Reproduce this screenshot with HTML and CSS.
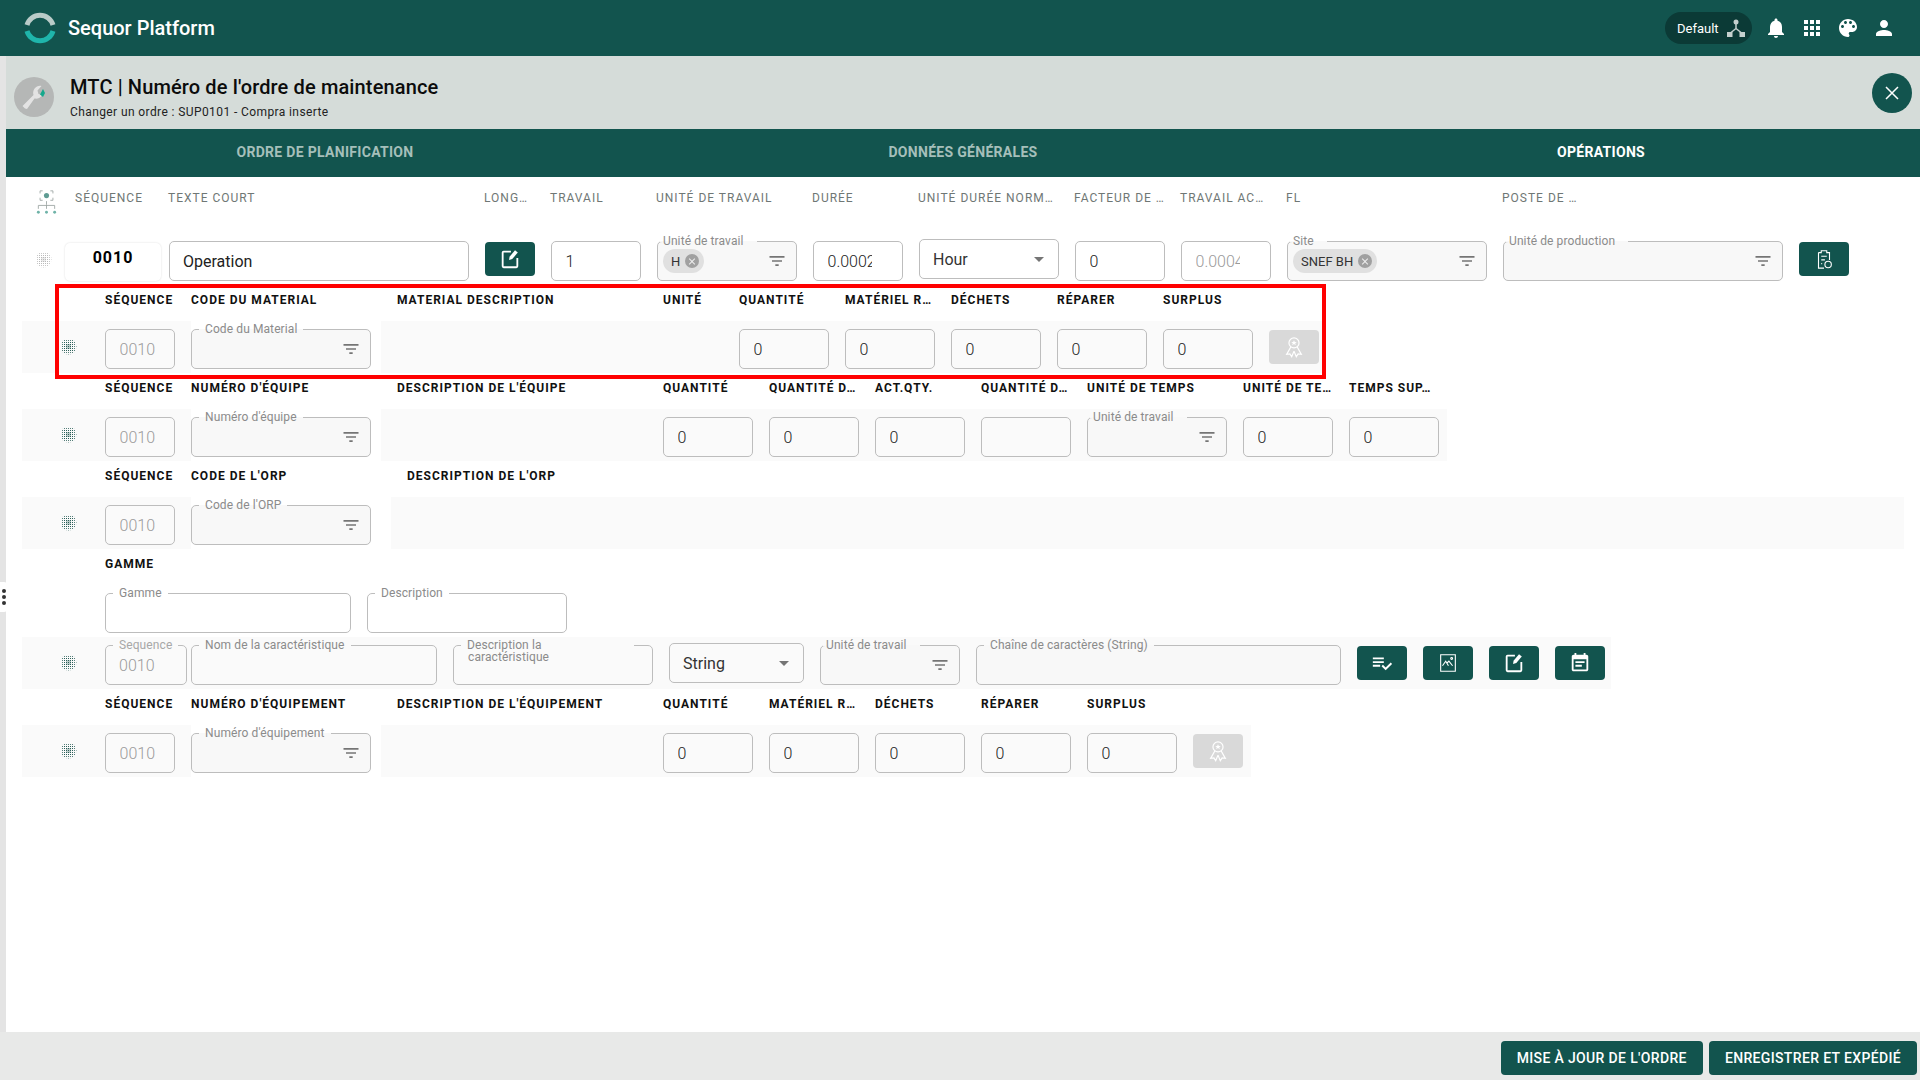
FILE: index.html
```html
<!DOCTYPE html>
<html lang="fr">
<head>
    <meta charset="UTF-8">
    <meta name="viewport" content="width=device-width, initial-scale=1.0">
    <title>Sequor Platform</title>
    <link rel="stylesheet" href="styles.css">
</head>
<body>
    <svg class="icon-defs" aria-hidden="true">
        <defs>
            <pattern id="dots" x="1" y="1" width="2" height="2" patternUnits="userSpaceOnUse">
                <rect width="1" height="1" fill="#2a5f58"/>
            </pattern>
        </defs>
        <symbol id="i-filter" viewBox="0 0 24 24"><path d="M10 18h4v-2h-4v2zM3 6v2h18V6H3zm3 7h12v-2H6v2z"/></symbol>
        <symbol id="i-drag" viewBox="0 0 16 16">
            <circle cx="7.500" cy="7.500" r="8" fill="url(#dots)" opacity=".8"/>
            <rect x="3" y="3" width="9" height="9" fill="url(#dots)"/>
            <rect x="5" y="5" width="5" height="5" fill="#2a5f58" opacity=".3"/>
        </symbol>
        <symbol id="i-edit" viewBox="0 0 24 24">
            <path fill="none" stroke="currentColor" stroke-width="2" d="M13 4H5a1 1 0 0 0-1 1v15a1 1 0 0 0 1 1h14a1 1 0 0 0 1-1v-9"/>
            <path d="M17.500 2.500l3 2.500-6 7-3.500 1 .5-3.500z"/>
        </symbol>
        <symbol id="i-award" viewBox="0 0 24 24">
            <g fill="none" stroke="currentColor" stroke-width="1.300">
                <circle cx="12" cy="7.500" r="5.500"/>
                <path d="M8.500 12L4 20l3.500-.5 2 3 2.500-6M15.500 12L20 20l-3.500-.5-2 3-2.500-6"/>
            </g>
            <path d="M12 4.500l.9 2h2.100l-1.700 1.300.7 2.200-2-1.300-2 1.300.7-2.200L9 6.500h2.100z"/>
        </symbol>
    </svg>

    <header class="topbar">
        <svg class="logo" viewBox="0 0 32 32">
            <path class="logo-top" d="M3 13A13.500 13.500 0 0 1 29 13"/>
            <path class="logo-bottom" d="M3 19A13.500 13.500 0 0 0 29 19"/>
        </svg>
        <span class="brand">Sequor Platform</span>
        <div class="topbar-right">
            <div class="org-chip">
                <span>Default</span>
                <svg class="org-icon" viewBox="0 0 18 18">
                    <circle cx="9" cy="3" r="2.500"/>
                    <path d="M0 13h5.500v5H0zM12.500 13H18v5h-5.500z"/>
                    <path class="org-line" d="M9 4v6M9 9.500l-5 4M9 9.500l5 4"/>
                </svg>
            </div>
            <svg class="top-icon" viewBox="0 0 24 24"><path d="M12 22c1.100 0 2-.9 2-2h-4c0 1.100.89 2 2 2zm6-6v-5c0-3.070-1.640-5.640-4.500-6.320V4c0-.83-.67-1.500-1.500-1.500s-1.500.67-1.500 1.500v.68C7.630 5.360 6 7.920 6 11v5l-2 2v1h16v-1l-2-2z"/></svg>
            <svg class="top-icon" viewBox="0 0 24 24"><path d="M4 8h4V4H4v4zm6 12h4v-4h-4v4zm-6 0h4v-4H4v4zm0-6h4v-4H4v4zm6 0h4v-4h-4v4zm6-10v4h4V4h-4zm-6 4h4V4h-4v4zm6 6h4v-4h-4v4zm0 6h4v-4h-4v4z"/></svg>
            <svg class="top-icon" viewBox="0 0 24 24"><path d="M12 3c-4.970 0-9 4.030-9 9s4.030 9 9 9c.83 0 1.500-.67 1.500-1.500 0-.39-.15-.74-.39-1.010-.23-.26-.38-.61-.38-.99 0-.83.67-1.500 1.500-1.500H16c2.760 0 5-2.240 5-5 0-4.420-4.030-8-9-8zm-5.500 9c-.83 0-1.500-.67-1.500-1.500S5.670 9 6.500 9 8 9.670 8 10.500 7.330 12 6.500 12zm3-4C8.670 8 8 7.330 8 6.500S8.670 5 9.500 5s1.500.67 1.500 1.500S10.330 8 9.500 8zm5 0c-.83 0-1.500-.67-1.500-1.500S13.670 5 14.500 5s1.500.67 1.500 1.500S15.330 8 14.500 8zm3 4c-.83 0-1.500-.67-1.500-1.500S16.670 9 17.500 9s1.500.67 1.500 1.500-.67 1.500-1.500 1.500z"/></svg>
            <svg class="top-icon" viewBox="0 0 24 24"><path d="M12 12c2.210 0 4-1.790 4-4s-1.790-4-4-4-4 1.790-4 4 1.790 4 4 4zm0 2c-2.670 0-8 1.340-8 4v2h16v-2c0-2.660-5.330-4-8-4z"/></svg>
        </div>
    </header>

    <div class="page">
        <div class="rail">
            <div class="rail-handle"><i></i><i></i><i></i></div>
        </div>

        <main class="content">
            <section class="subheader">
                <div class="sub-icon">
                    <svg viewBox="0 0 40 40">
                        <path class="wrench" d="M11 31.500l-2.500-2.500 11-11c-1-3.500.5-7 3.500-8.500 1.500-.7 3-.8 4.500-.5l-4 4.500 1 3.500 3.500 1-.5 1c-1.500 2-4 3-7 2.500L13 32z"/>
                        <path class="wrench-tip" d="M29 12l2 4-2 4-3-2.500z"/>
                    </svg>
                </div>
                <div class="sub-text">
                    <h1>MTC | Numéro de l'ordre de maintenance</h1>
                    <p>Changer un ordre : SUP0101 - Compra inserte</p>
                </div>
                <button class="close-btn" type="button" aria-label="Fermer">
                    <svg viewBox="0 0 16 16"><path d="M2 2l12 12M14 2L2 14"/></svg>
                </button>
            </section>

            <nav class="tabs">
                <a class="tab">ORDRE DE PLANIFICATION</a>
                <a class="tab">DONNÉES GÉNÉRALES</a>
                <a class="tab active">OPÉRATIONS</a>
            </nav>

            <div class="col-head">
                <svg class="tree-icon" viewBox="0 0 23 28">
                    <path class="tree-line" d="M7 1H4v3M16 1h3v3M7 12H4V9M16 12h3V9M11.500 13v4M2 22v-4h19v4M11.500 17v5"/>
                    <circle class="tree-eye" cx="11.500" cy="6.500" r="3"/>
                    <circle class="tree-dot" cx="2" cy="26" r="1.700"/>
                    <circle class="tree-dot" cx="11.500" cy="26" r="1.700"/>
                    <circle class="tree-dot" cx="21" cy="26" r="1.700"/>
                </svg>
                <span class="w77">SÉQUENCE</span>
                <span class="w300">TEXTE COURT</span>
                <span class="w50">LONG…</span>
                <span class="w90">TRAVAIL</span>
                <span class="w140">UNITÉ DE TRAVAIL</span>
                <span class="w90">DURÉE</span>
                <span class="w140">UNITÉ DURÉE NORM…</span>
                <span class="w90">FACTEUR DE …</span>
                <span class="w90">TRAVAIL AC…</span>
                <span class="w200">FL</span>
                <span class="w76">POSTE DE …</span>
            </div>

            <div class="op-row">
                <svg class="drag drag-faint"><use href="#i-drag"/></svg>
                <div class="seq-card">0010</div>
                <div class="field w300 field-big"><span>Operation</span></div>
                <button class="act-btn lift" type="button"><svg viewBox="0 0 24 24"><use href="#i-edit"/></svg></button>
                <div class="field w90"><span>1</span></div>
                <fieldset class="box w140 filled chip-box">
                    <legend class="tight">Unité de travail</legend>
                    <span class="chip">H<i class="chip-x"></i></span>
                    <svg class="filter"><use href="#i-filter"/></svg>
                </fieldset>
                <div class="field w90 clip"><span>0.0002</span></div>
                <div class="pick w140 raise"><span>Hour</span><i class="caret"></i></div>
                <div class="field w90"><span>0</span></div>
                <div class="field w90 clip muted"><span>0.0004</span></div>
                <fieldset class="box w200 filled chip-box">
                    <legend class="tight">Site</legend>
                    <span class="chip">SNEF BH<i class="chip-x"></i></span>
                    <svg class="filter"><use href="#i-filter"/></svg>
                </fieldset>
                <fieldset class="box w280 filled">
                    <legend class="tight">Unité de production</legend>
                    <svg class="filter"><use href="#i-filter"/></svg>
                </fieldset>
                <button class="act-btn lift" type="button">
                    <svg viewBox="0 0 24 24" class="line-icon"><path d="M6 5h3V3h6v2h3v8M6 5v17h6M9 9h6M9 13h4M9 17h1"/><circle cx="16.500" cy="18" r="3.500"/></svg>
                </button>
            </div>

            <!-- material -->
            <div class="labels">
                <span class="w70">SÉQUENCE</span>
                <span class="w180">CODE DU MATERIAL</span>
                <span class="w250 desc-gap">MATERIAL DESCRIPTION</span>
                <span class="w60">UNITÉ</span>
                <span class="w90">QUANTITÉ</span>
                <span class="w90">MATÉRIEL R…</span>
                <span class="w90">DÉCHETS</span>
                <span class="w90">RÉPARER</span>
                <span class="w90">SURPLUS</span>
            </div>
            <div class="line">
                <div class="band band-seq">
                    <svg class="drag"><use href="#i-drag"/></svg>
                    <div class="field w70 muted"><span>0010</span></div>
                </div>
                <div class="select-cell">
                    <fieldset class="box w180 filled">
                        <legend>Code du Material</legend>
                        <svg class="filter"><use href="#i-filter"/></svg>
                    </fieldset>
                </div>
                <div class="band band-rest band-material">
                    <div class="w250"></div>
                    <div class="w60"></div>
                    <div class="field w90"><span>0</span></div>
                    <div class="field w90"><span>0</span></div>
                    <div class="field w90"><span>0</span></div>
                    <div class="field w90"><span>0</span></div>
                    <div class="field w90"><span>0</span></div>
                    <button class="act-btn act-off lift" type="button"><svg viewBox="0 0 24 24"><use href="#i-award"/></svg></button>
                </div>
            </div>

            <!-- equipe -->
            <div class="labels">
                <span class="w70">SÉQUENCE</span>
                <span class="w180">NUMÉRO D'ÉQUIPE</span>
                <span class="w250 desc-gap">DESCRIPTION DE L'ÉQUIPE</span>
                <span class="w90">QUANTITÉ</span>
                <span class="w90">QUANTITÉ D…</span>
                <span class="w90">ACT.QTY.</span>
                <span class="w90">QUANTITÉ D…</span>
                <span class="w140">UNITÉ DE TEMPS</span>
                <span class="w90">UNITÉ DE TE…</span>
                <span class="w90">TEMPS SUP…</span>
            </div>
            <div class="line">
                <div class="band band-seq">
                    <svg class="drag"><use href="#i-drag"/></svg>
                    <div class="field w70 muted"><span>0010</span></div>
                </div>
                <div class="select-cell">
                    <fieldset class="box w180 filled">
                        <legend>Numéro d'équipe</legend>
                        <svg class="filter"><use href="#i-filter"/></svg>
                    </fieldset>
                </div>
                <div class="band band-rest band-team">
                    <div class="w250"></div>
                    <div class="field w90"><span>0</span></div>
                    <div class="field w90"><span>0</span></div>
                    <div class="field w90"><span>0</span></div>
                    <div class="field w90"></div>
                    <fieldset class="box w140 filled">
                        <legend class="tight">Unité de travail</legend>
                        <svg class="filter"><use href="#i-filter"/></svg>
                    </fieldset>
                    <div class="field w90"><span>0</span></div>
                    <div class="field w90"><span>0</span></div>
                </div>
            </div>

            <!-- orp -->
            <div class="labels">
                <span class="w70">SÉQUENCE</span>
                <span class="w180">CODE DE L'ORP</span>
                <span class="w250 desc-gap-wide">DESCRIPTION DE L'ORP</span>
            </div>
            <div class="line">
                <div class="band band-seq">
                    <svg class="drag"><use href="#i-drag"/></svg>
                    <div class="field w70 muted"><span>0010</span></div>
                </div>
                <div class="select-cell select-cell-wide">
                    <fieldset class="box w180 filled">
                        <legend>Code de l'ORP</legend>
                        <svg class="filter"><use href="#i-filter"/></svg>
                    </fieldset>
                </div>
                <div class="band band-rest band-fill"></div>
            </div>

            <!-- gamme -->
            <div class="labels labels-low">
                <span class="w180">GAMME</span>
            </div>
            <div class="gamme-row">
                <fieldset class="box w246">
                    <legend>Gamme</legend>
                </fieldset>
                <fieldset class="box w200">
                    <legend>Description</legend>
                </fieldset>
            </div>
            <div class="line">
                <div class="band band-char">
                    <svg class="drag"><use href="#i-drag"/></svg>
                    <fieldset class="box w82 seq-box">
                        <legend>Sequence</legend>
                        <span class="box-val">0010</span>
                    </fieldset>
                    <fieldset class="box w246">
                        <legend>Nom de la caractéristique</legend>
                    </fieldset>
                    <fieldset class="box w200 note-box">
                        <legend class="legend-wide">Description la</legend>
                        <span class="box-note">caractéristique</span>
                    </fieldset>
                    <div class="pick w135 raise"><span>String</span><i class="caret"></i></div>
                    <fieldset class="box w140 filled">
                        <legend class="tight">Unité de travail</legend>
                        <svg class="filter"><use href="#i-filter"/></svg>
                    </fieldset>
                    <fieldset class="box w365 filled">
                        <legend>Chaîne de caractères (String)</legend>
                    </fieldset>
                    <button class="act-btn lift" type="button">
                        <svg viewBox="0 0 24 24"><path d="M14 10H2v2h12v-2zm0-4H2v2h12V6zM2 16h8v-2H2v2zm19.500-4.500L23 13l-6.990 7-4.510-4.500L13 14l3.010 3 5.490-5.500z"/></svg>
                    </button>
                    <button class="act-btn lift" type="button">
                        <svg viewBox="0 0 24 24" class="line-icon"><path d="M4 3h16v18H4zM6 15l3.500-5 3 5M11 12l2-2 4 5"/><circle cx="16" cy="7" r="1"/></svg>
                    </button>
                    <button class="act-btn lift" type="button"><svg viewBox="0 0 24 24"><use href="#i-edit"/></svg></button>
                    <button class="act-btn lift" type="button">
                        <svg viewBox="0 0 24 24"><path d="M17 10H7v2h10v-2zm2-7h-1V1h-2v2H8V1H6v2H5c-1.110 0-1.990.9-1.990 2L3 19c0 1.100.89 2 2 2h14c1.100 0 2-.9 2-2V5c0-1.100-.9-2-2-2zm0 16H5V8h14v11zm-5-5H7v2h7v-2z"/></svg>
                    </button>
                </div>
            </div>

            <!-- equipement -->
            <div class="labels labels-low">
                <span class="w70">SÉQUENCE</span>
                <span class="w180">NUMÉRO D'ÉQUIPEMENT</span>
                <span class="w250 desc-gap">DESCRIPTION DE L'ÉQUIPEMENT</span>
                <span class="w90">QUANTITÉ</span>
                <span class="w90">MATÉRIEL R…</span>
                <span class="w90">DÉCHETS</span>
                <span class="w90">RÉPARER</span>
                <span class="w90">SURPLUS</span>
            </div>
            <div class="line">
                <div class="band band-seq">
                    <svg class="drag"><use href="#i-drag"/></svg>
                    <div class="field w70 muted"><span>0010</span></div>
                </div>
                <div class="select-cell">
                    <fieldset class="box w180 filled">
                        <legend>Numéro d'équipement</legend>
                        <svg class="filter"><use href="#i-filter"/></svg>
                    </fieldset>
                </div>
                <div class="band band-rest band-equip">
                    <div class="w250"></div>
                    <div class="field w90"><span>0</span></div>
                    <div class="field w90"><span>0</span></div>
                    <div class="field w90"><span>0</span></div>
                    <div class="field w90"><span>0</span></div>
                    <div class="field w90"><span>0</span></div>
                    <button class="act-btn act-off lift" type="button"><svg viewBox="0 0 24 24"><use href="#i-award"/></svg></button>
                </div>
            </div>

            <div class="red-mark"></div>
        </main>
    </div>

    <footer class="footer">
        <button class="foot-btn" type="button">MISE À JOUR DE L'ORDRE</button>
        <button class="foot-btn" type="button">ENREGISTRER ET EXPÉDIÉ</button>
    </footer>
</body>
</html>
```

FILE: styles.css
```css
* {
    margin: 0;
    padding: 0;
    box-sizing: border-box;
}
body {
    height: 1080px;
    overflow: hidden;
    display: flex;
    flex-direction: column;
    font-family: Roboto, "Liberation Sans", sans-serif;
    color: #222;
    background-color: #fff;
}
.icon-defs {
    position: absolute;
    width: 0;
    height: 0;
}

/* top bar */
.topbar {
    height: 56px;
    flex: none;
    display: flex;
    align-items: center;
    padding: 0 24px;
    background-color: #12544e;
    color: #fff;
}
.logo {
    width: 32px;
    height: 32px;
    margin-right: 12px;
    fill: none;
    stroke-width: 5;
}
.logo-top {
    stroke: #b9cbc8;
}
.logo-bottom {
    stroke: #1fb5ab;
}
.brand {
    font-size: 20px;
    font-weight: 500;
}
.topbar-right {
    margin-left: auto;
    display: flex;
    align-items: center;
    gap: 12px;
}
.org-chip {
    width: 87px;
    height: 32px;
    padding: 0 7px 0 12px;
    display: flex;
    align-items: center;
    justify-content: space-between;
    border-radius: 16px;
    background-color: #0b3a36;
    font-size: 13px;
}
.org-icon {
    width: 18px;
    height: 18px;
    fill: #c5d0ce;
}
.org-line {
    fill: none;
    stroke: #c5d0ce;
    stroke-width: 1.500;
}
.top-icon {
    width: 24px;
    height: 24px;
    fill: #fff;
}

/* page frame */
.page {
    flex: 1;
    display: flex;
    min-height: 0;
}
.rail {
    width: 6px;
    flex: none;
    position: relative;
    background-color: #e4e4e4;
}
.rail-handle {
    position: absolute;
    top: 526px;
    left: 0;
    width: 7px;
    height: 30px;
    display: flex;
    flex-direction: column;
    align-items: center;
    justify-content: center;
    gap: 2px;
    background-color: #fff;
    border-radius: 0 3px 3px 0;
}
.rail-handle i {
    width: 4px;
    height: 4px;
    border-radius: 50%;
    background-color: #333;
}
.content {
    flex: 1;
    min-width: 0;
    position: relative;
}

/* sub header */
.subheader {
    height: 73px;
    display: flex;
    align-items: center;
    padding: 0 8px 0 8px;
    background-color: #d5dcd9;
}
.sub-icon {
    width: 40px;
    height: 40px;
    margin: 9px 16px 0 0;
    border-radius: 50%;
    background-color: #b5b7b6;
}
.sub-icon svg {
    display: block;
}
.wrench {
    fill: #e3e3e3;
}
.wrench-tip {
    fill: #14a88c;
}
.sub-text {
    margin-top: 8px;
}
.sub-text h1 {
    font-size: 20px;
    font-weight: 500;
    line-height: 24px;
    letter-spacing: .13px;
    color: #0c0c0c;
}
.sub-text p {
    margin-top: 6px;
    font-size: 12px;
    line-height: 14px;
    letter-spacing: .4px;
    color: #222;
}
.close-btn {
    margin-left: auto;
    width: 40px;
    height: 40px;
    display: flex;
    align-items: center;
    justify-content: center;
    border: 0;
    border-radius: 50%;
    background-color: #12544e;
}
.close-btn svg {
    width: 16px;
    height: 16px;
    fill: none;
    stroke: #fff;
    stroke-width: 1.500;
}

/* tabs */
.tabs {
    height: 48px;
    display: grid;
    grid-template-columns: repeat(3, 638px);
    background-color: #12544e;
}
.tab {
    display: flex;
    align-items: center;
    justify-content: center;
    padding-bottom: 2px;
    font-size: 14px;
    font-weight: 700;
    letter-spacing: .3px;
    color: #a5bfba;
}
.tab.active {
    color: #fff;
}

/* widths shared by labels and fields */
.w50 { width: 50px; }
.w60 { width: 60px; }
.w70 { width: 70px; }
.w76 { width: 76px; }
.w77 { width: 77px; }
.w82 { width: 82px; }
.w90 { width: 90px; }
.w135 { width: 135px; }
.w140 { width: 140px; }
.w180 { width: 180px; }
.w200 { width: 200px; }
.w246 { width: 246px; }
.w250 { width: 250px; }
.w280 { width: 280px; }
.w300 { width: 300px; }
.w365 { width: 365px; }

/* first table head */
.col-head {
    height: 40px;
    display: flex;
    align-items: center;
    gap: 16px;
    padding: 1px 0 0 29px;
    font-size: 12px;
    letter-spacing: 1px;
    color: #6f7775;
}
.col-head span {
    flex: none;
    white-space: nowrap;
}
.tree-icon {
    width: 23px;
    height: 24px;
    flex: none;
    margin: 8px 1px 0 0;
}
.tree-line {
    fill: none;
    stroke: #9aa4a2;
    stroke-width: 1;
}
.tree-eye {
    fill: #5f9c93;
}
.tree-dot {
    fill: #6fb3a8;
}

.op-row {
    height: 68px;
    padding: 24px 0 0 30px;
    display: flex;
    align-items: flex-start;
    gap: 16px;
}
.seq-card {
    width: 96px;
    height: 38px;
    margin: 2px -8px 0 -3px;
    display: flex;
    align-items: center;
    justify-content: center;
    padding-bottom: 10px;
    border-radius: 5px;
    box-shadow: 0 0 2px rgba(0, 0, 0, .15);
    font-size: 16px;
    font-weight: 700;
    letter-spacing: 1px;
    color: #000;
}

/* fields */
.field {
    height: 40px;
    flex: none;
    display: flex;
    align-items: center;
    padding: 0 14px 0 13.500px;
    border: 1px solid #bdbdbd;
    border-radius: 5px;
    font-size: 16px;
    font-weight: 300;
    color: #222;
}
.field span {
    display: block;
    width: 100%;
    overflow: hidden;
    white-space: nowrap;
}
.field-big {
    padding-left: 13px;
    font-weight: 400;
}
.clip {
    padding-right: 30px;
}
.muted {
    color: #9a9a9a;
}
.box {
    height: 40px;
    flex: none;
    min-width: 0;
    display: flex;
    align-items: center;
    justify-content: flex-end;
    padding: 0 13px 0 14px;
    border: 1px solid #bdbdbd;
    border-radius: 5px;
}
.box legend {
    height: 1px;
    line-height: 1px;
    margin-left: -7px;
    padding: 0 6px;
    font-size: 12px;
    letter-spacing: .1px;
    font-weight: 400;
    white-space: nowrap;
    color: #8b8b8b;
}
.box legend.tight {
    margin-left: -12px;
    padding: 0 13px 0 3px;
}
.box legend.legend-wide {
    width: 173px;
}
.filled {
    background-color: #f8f8f8;
}
.chip-box {
    justify-content: space-between;
    padding-left: 5px;
}
.chip-box legend.tight {
    margin-left: -3px;
}
.chip {
    height: 24px;
    display: flex;
    align-items: center;
    gap: 5px;
    padding: 0 5px 0 8px;
    border-radius: 12px;
    background-color: #e0e0e0;
    font-size: 13px;
    color: #333;
}
.chip-x {
    width: 14px;
    height: 14px;
    position: relative;
    border-radius: 50%;
    background-color: #a0a0a0;
}
.chip-x::before,
.chip-x::after {
    content: "";
    position: absolute;
    top: 6.500px;
    left: 3px;
    width: 8px;
    height: 1px;
    background-color: #eee;
    transform: rotate(45deg);
}
.chip-x::after {
    transform: rotate(-45deg);
}
.filter {
    width: 20px;
    height: 20px;
    flex: none;
    margin-right: -4px;
    fill: #757575;
}
.pick {
    height: 40px;
    flex: none;
    display: flex;
    align-items: center;
    justify-content: space-between;
    padding: 0 14px 0 13px;
    border: 1px solid #bdbdbd;
    border-radius: 5px;
    font-size: 16px;
    color: #333;
}
.raise {
    margin-top: -2px;
}
.caret {
    border-left: 5px solid transparent;
    border-right: 5px solid transparent;
    border-top: 5px solid #757575;
}
.box-val {
    width: 100%;
    font-size: 16px;
    font-weight: 300;
    color: #9a9a9a;
}
.seq-box {
    padding-left: 13px;
    margin-right: -12px;
}
.seq-box legend {
    margin-left: -6px;
    color: #a8a8a8;
}
.note-box {
    justify-content: flex-start;
    align-items: flex-start;
    padding-top: 5px;
}
.box-note {
    font-size: 12px;
    line-height: 12px;
    letter-spacing: .1px;
    color: #8b8b8b;
}

/* buttons */
.act-btn {
    width: 50px;
    height: 34px;
    flex: none;
    display: flex;
    align-items: center;
    justify-content: center;
    border: 0;
    border-radius: 4px;
    background-color: #12544e;
    color: #fff;
    fill: #fff;
}
.act-btn svg {
    width: 22px;
    height: 22px;
}
.act-off {
    background-color: #d9d9d9;
}
.lift {
    margin-top: 1px;
}
.line-icon {
    fill: none;
    stroke: #fff;
    stroke-width: 1.200;
}

/* sections */
.labels {
    height: 36px;
    display: flex;
    gap: 16px;
    padding-left: 99px;
    font-size: 12px;
    font-weight: 700;
    line-height: 30px;
    letter-spacing: 1px;
    color: #111;
}
.labels span {
    flex: none;
    white-space: nowrap;
}
.labels-low {
    padding-top: 1px;
    line-height: 28px;
}
.desc-gap {
    margin-left: 10px;
}
.desc-gap-wide {
    margin-left: 20px;
}
.line {
    height: 52px;
    display: flex;
    padding-left: 16px;
}
.band {
    height: 52px;
    padding-top: 8px;
    display: flex;
    align-items: flex-start;
    background-color: #fafafa;
}
.band-seq {
    width: 169px;
    flex: none;
    padding-left: 39px;
}
.drag {
    width: 16px;
    height: 16px;
    flex: none;
    margin: 10px 28px 0 0;
}
.drag-faint {
    margin: 11px 0 0;
    opacity: .4;
    filter: grayscale(1);
}
.select-cell {
    width: 190px;
    flex: none;
    padding-top: 8px;
}
.select-cell-wide {
    width: 200px;
}
.band-rest {
    gap: 16px;
    padding-left: 16px;
}
.band-material {
    width: 944px;
}
.band-team {
    width: 1066px;
}
.band-equip {
    width: 870px;
}
.band-fill {
    flex: 1;
    margin-right: 16px;
}
.gamme-row {
    height: 52px;
    display: flex;
    gap: 16px;
    padding: 8px 0 0 99px;
}
.band-char {
    width: 1589px;
    flex: none;
    padding-left: 39px;
    gap: 16px;
}
.band-char .drag {
    margin-right: 12px;
}

/* footer */
.footer {
    height: 48px;
    flex: none;
    display: flex;
    justify-content: flex-end;
    gap: 6px;
    padding: 9px 3px 0 0;
    background-color: #e8e9e8;
}
.foot-btn {
    height: 34px;
    padding: 0 16px;
    border: 0;
    border-radius: 4px;
    background-color: #12544e;
    font-family: inherit;
    font-size: 14px;
    font-weight: 500;
    letter-spacing: .35px;
    color: #fff;
}

/* annotation drawn over the material row */
.red-mark {
    position: absolute;
    top: 228px;
    left: 49px;
    width: 1271px;
    height: 95px;
    border: 4px solid #f00;
}
```
